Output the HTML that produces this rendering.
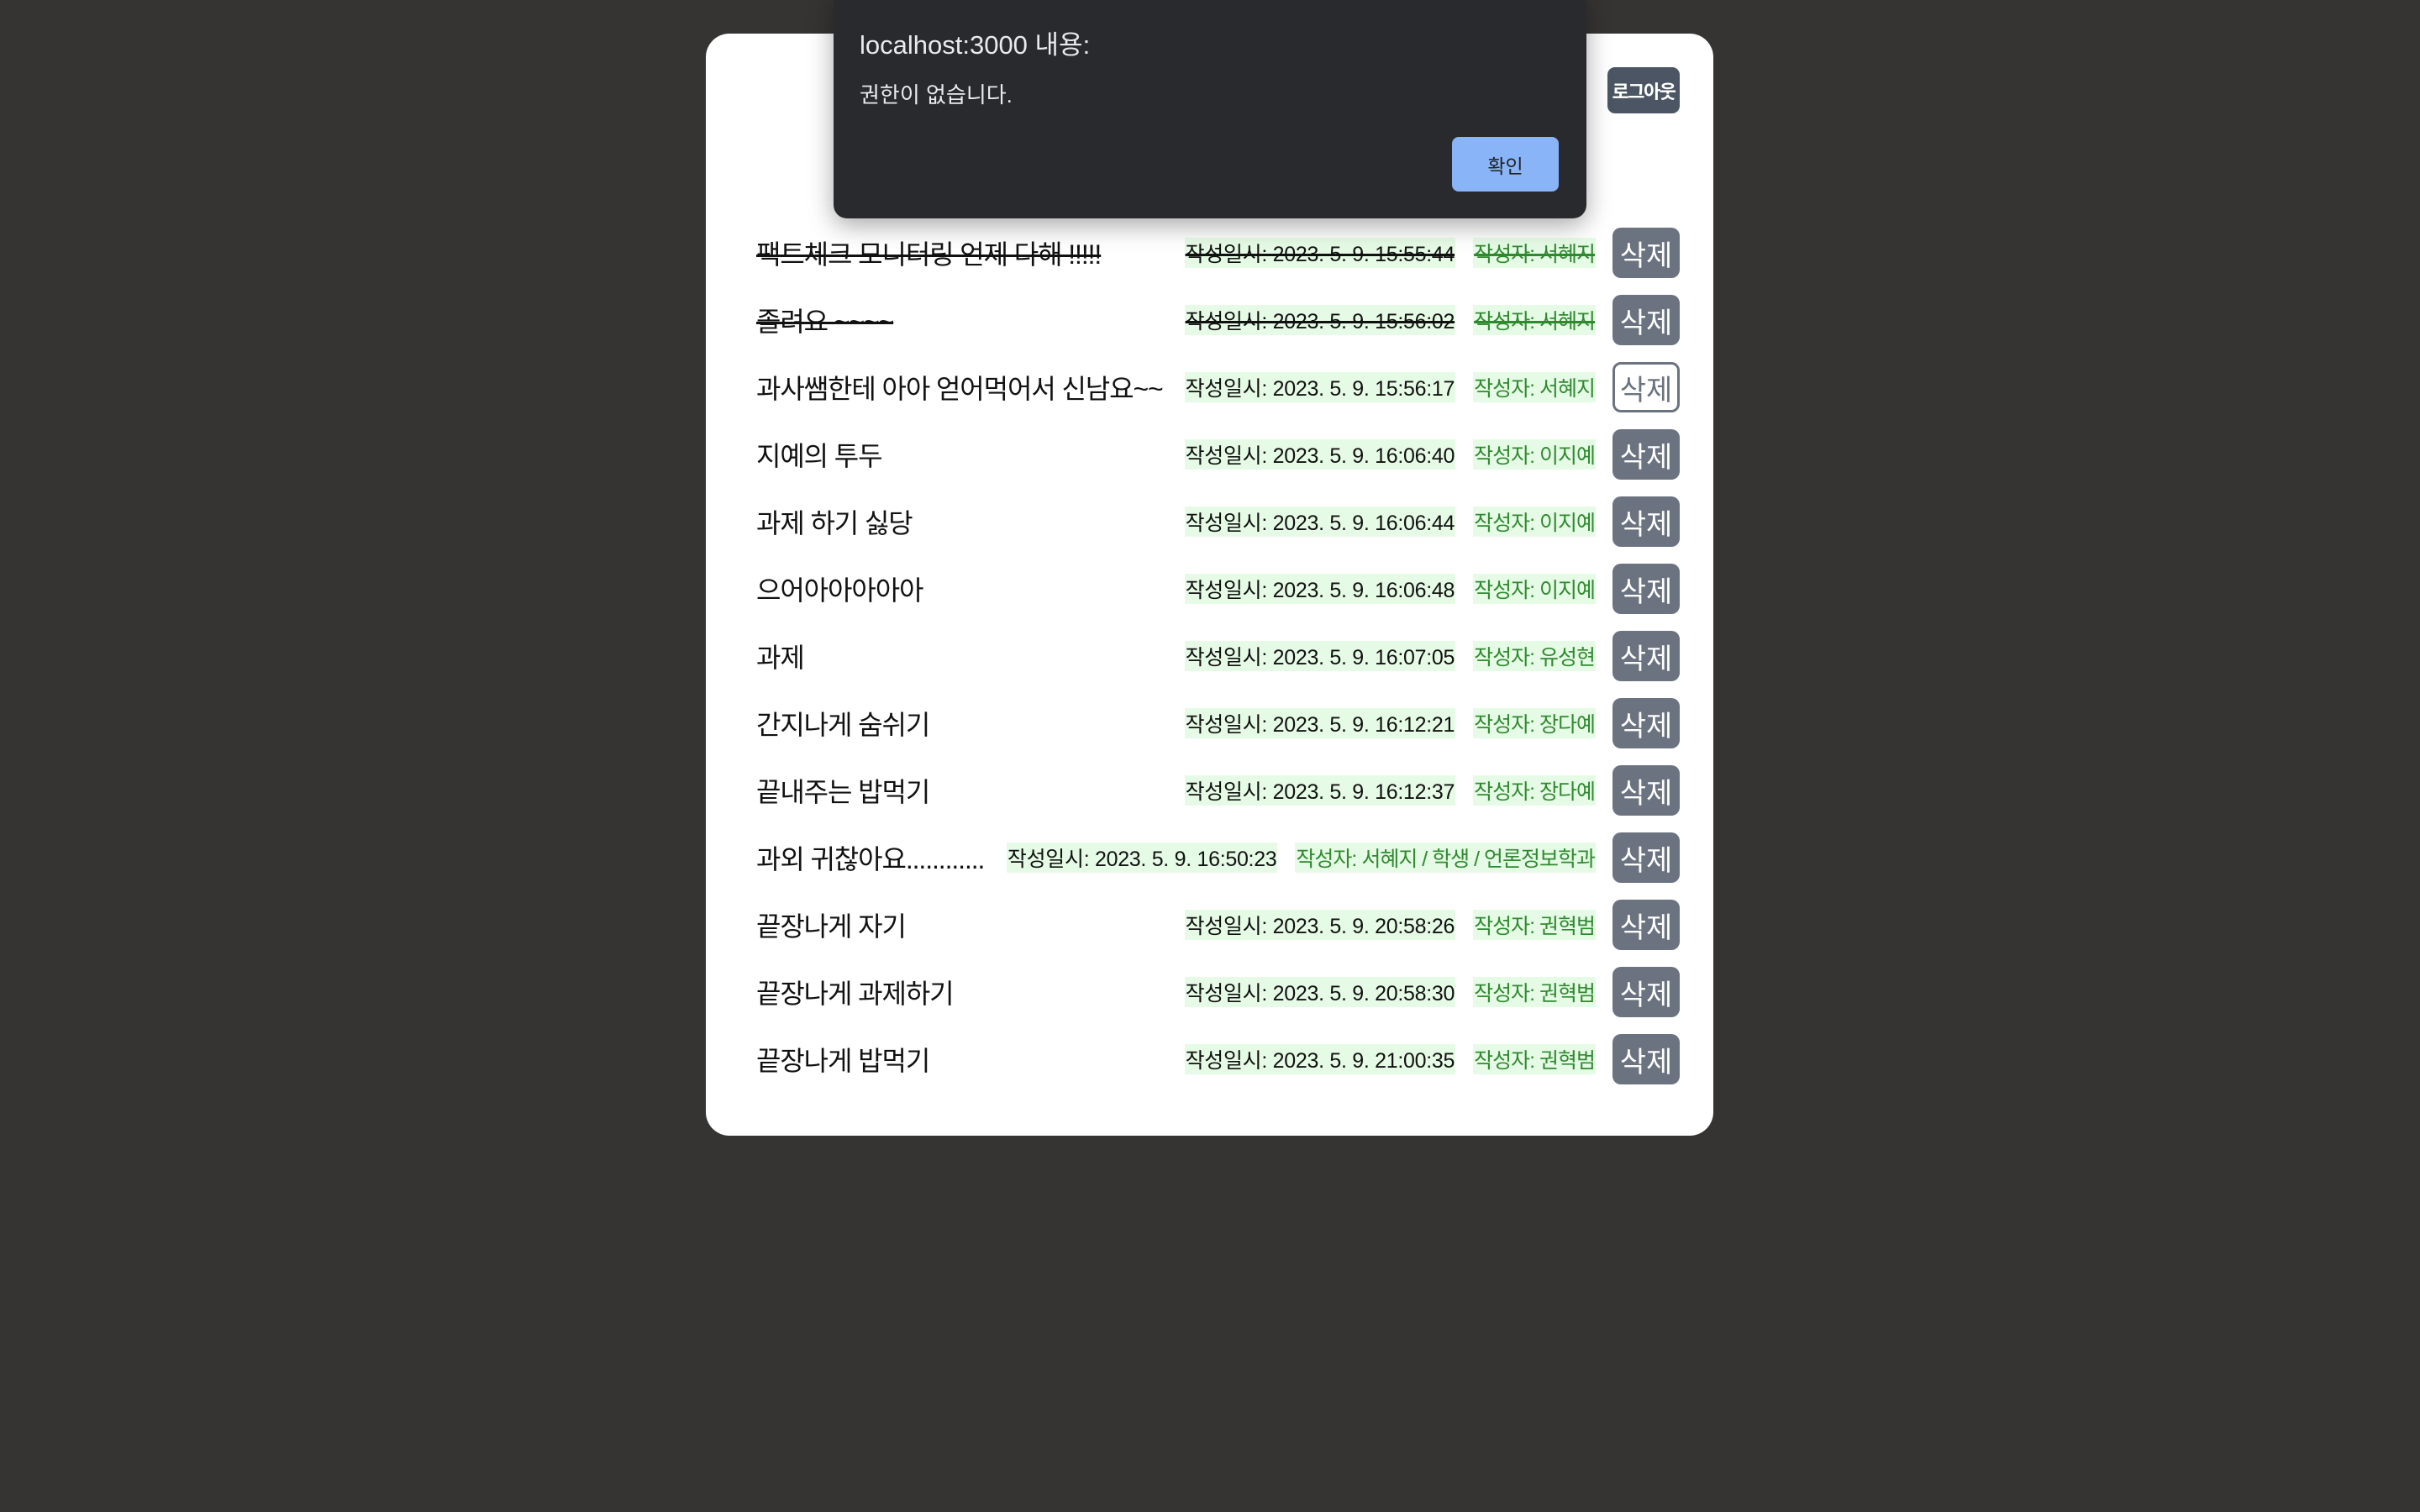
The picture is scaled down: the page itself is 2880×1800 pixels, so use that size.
<!DOCTYPE html>
<html><head><meta charset="utf-8"><style>
*{margin:0;padding:0;box-sizing:border-box}
body{width:2880px;height:1800px;background:#353433;position:relative;overflow:hidden;font-family:"Liberation Sans","Noto Sans CJK KR",sans-serif}
.card{position:absolute;left:840px;top:40px;width:1199px;height:1312px;background:#fff;border-radius:28px}
.logout{position:absolute;left:1913px;top:80px;width:86px;height:55px;background:#4b5563;color:#fff;border-radius:9px;font-size:22px;font-weight:bold;display:flex;align-items:center;justify-content:center;letter-spacing:-1.5px}
.row{position:absolute;left:900px;width:1099px;height:60px}
.t{position:absolute;left:0;top:2px;height:60px;line-height:60px;font-size:32px;color:#111;white-space:nowrap;letter-spacing:-1.1px}
.r{position:absolute;right:0;top:0;height:60px;display:flex;align-items:center}
.d,.a{background:#e6fbe6;font-size:25px;height:36px;display:flex;align-items:center;padding:0 1px;white-space:nowrap}
.d{color:#111;letter-spacing:-0.3px}
.a{color:#2f8a2f;margin-left:21px;letter-spacing:-1px}
.b{margin-left:20px;width:80px;height:60px;background:#6b7280;border-radius:10px;color:#fff;font-size:34px;display:flex;align-items:center;justify-content:center;flex-shrink:0}
.b.w{background:#fff;border:3px solid #6b7280;color:#6b7280}
.s{text-decoration:line-through;text-decoration-thickness:3px}
.dlg{position:absolute;left:992px;top:-10px;width:896px;height:270px;background:#292a2d;border-radius:16px;box-shadow:0 8px 30px rgba(0,0,0,.35)}
.dlg .h{position:absolute;left:31px;top:38px;font-size:31px;color:#e8eaed}
.dlg .m{position:absolute;left:31px;top:103px;font-size:26px;color:#e8eaed}
.dlg .ok{position:absolute;left:736px;top:173px;width:127px;height:65px;background:#8ab4f8;border-radius:8px;color:#202124;font-size:23px;display:flex;align-items:center;justify-content:center}
</style></head><body>
<div class="card"></div>
<div class="logout">로그아웃</div>

<div class="row" style="top:271px"><span class="t s">팩트체크 모니터링 언제 다해 !!!!!</span><div class="r"><span class="d s">작성일시: 2023. 5. 9. 15:55:44</span><span class="a s">작성자: 서혜지</span><span class="b">삭제</span></div></div>
<div class="row" style="top:351px"><span class="t s">졸려요 ~~~~</span><div class="r"><span class="d s">작성일시: 2023. 5. 9. 15:56:02</span><span class="a s">작성자: 서혜지</span><span class="b">삭제</span></div></div>
<div class="row" style="top:431px"><span class="t">과사쌤한테 아아 얻어먹어서 신남요~~</span><div class="r"><span class="d">작성일시: 2023. 5. 9. 15:56:17</span><span class="a">작성자: 서혜지</span><span class="b w">삭제</span></div></div>
<div class="row" style="top:511px"><span class="t">지예의 투두</span><div class="r"><span class="d">작성일시: 2023. 5. 9. 16:06:40</span><span class="a">작성자: 이지예</span><span class="b">삭제</span></div></div>
<div class="row" style="top:591px"><span class="t">과제 하기 싫당</span><div class="r"><span class="d">작성일시: 2023. 5. 9. 16:06:44</span><span class="a">작성자: 이지예</span><span class="b">삭제</span></div></div>
<div class="row" style="top:671px"><span class="t">으어아아아아아</span><div class="r"><span class="d">작성일시: 2023. 5. 9. 16:06:48</span><span class="a">작성자: 이지예</span><span class="b">삭제</span></div></div>
<div class="row" style="top:751px"><span class="t">과제</span><div class="r"><span class="d">작성일시: 2023. 5. 9. 16:07:05</span><span class="a">작성자: 유성현</span><span class="b">삭제</span></div></div>
<div class="row" style="top:831px"><span class="t">간지나게 숨쉬기</span><div class="r"><span class="d">작성일시: 2023. 5. 9. 16:12:21</span><span class="a">작성자: 장다예</span><span class="b">삭제</span></div></div>
<div class="row" style="top:911px"><span class="t">끝내주는 밥먹기</span><div class="r"><span class="d">작성일시: 2023. 5. 9. 16:12:37</span><span class="a">작성자: 장다예</span><span class="b">삭제</span></div></div>
<div class="row" style="top:991px"><span class="t">과외 귀찮아요............</span><div class="r"><span class="d">작성일시: 2023. 5. 9. 16:50:23</span><span class="a">작성자: 서혜지 / 학생 / 언론정보학과</span><span class="b">삭제</span></div></div>
<div class="row" style="top:1071px"><span class="t">끝장나게 자기</span><div class="r"><span class="d">작성일시: 2023. 5. 9. 20:58:26</span><span class="a">작성자: 권혁범</span><span class="b">삭제</span></div></div>
<div class="row" style="top:1151px"><span class="t">끝장나게 과제하기</span><div class="r"><span class="d">작성일시: 2023. 5. 9. 20:58:30</span><span class="a">작성자: 권혁범</span><span class="b">삭제</span></div></div>
<div class="row" style="top:1231px"><span class="t">끝장나게 밥먹기</span><div class="r"><span class="d">작성일시: 2023. 5. 9. 21:00:35</span><span class="a">작성자: 권혁범</span><span class="b">삭제</span></div></div>

<div class="dlg">
<div class="h">localhost:3000 내용:</div>
<div class="m">권한이 없습니다.</div>
<div class="ok">확인</div>
</div>
</body></html>
